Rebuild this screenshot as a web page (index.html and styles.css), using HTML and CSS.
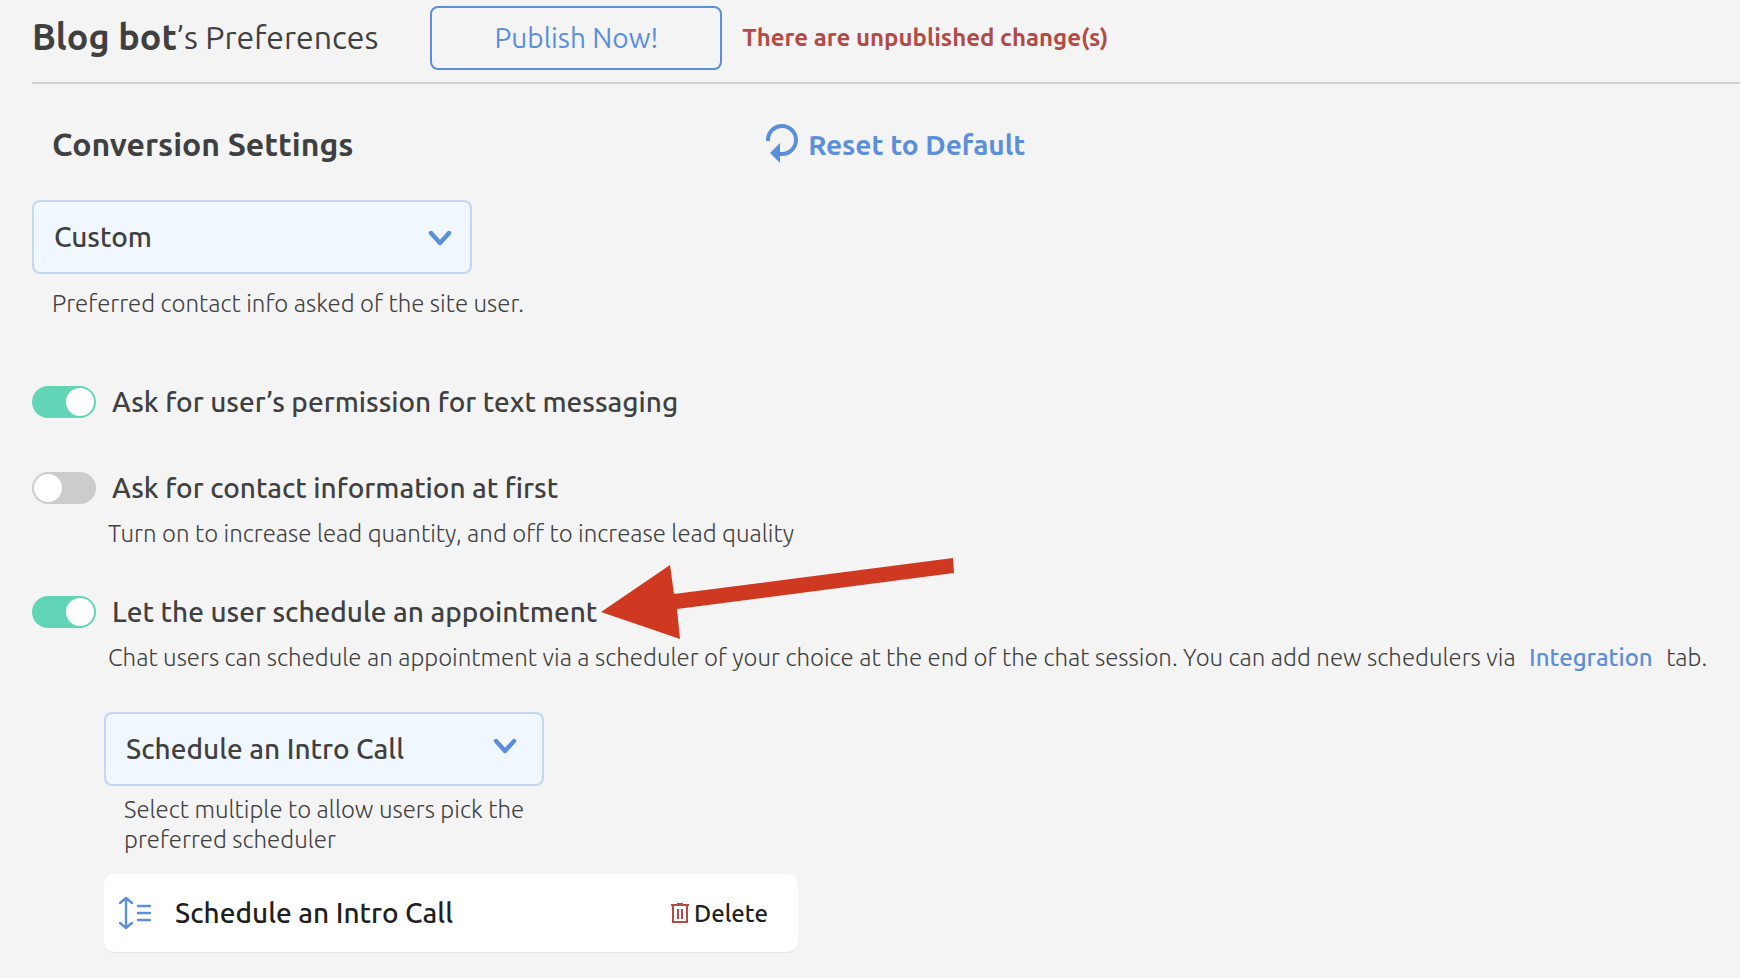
FILE: index.html
```
<!DOCTYPE html>
<html lang="en">
<head>
    <meta charset="UTF-8">
    <meta name="viewport" content="width=device-width, initial-scale=1.0">
    <title>Blog bot's Preferences</title>
    <link rel="stylesheet" href="styles.css">
</head>
<body>
    <header class="page-header">
        <h1><strong>Blog bot</strong><span>’s Preferences</span></h1>
        <button type="button" class="publish">Publish Now!</button>
        <p class="warning">There are unpublished change(s)</p>
    </header>

    <main class="settings">
        <div class="section-head">
            <h2 id="conversion">Conversion Settings</h2>
            <button type="button" class="reset">
                <svg width="32" height="42" viewBox="0 0 32 42" aria-hidden="true">
                    <path d="M2 18v-2a14 14 0 1 1 14 15h-2" fill="none" stroke="currentColor" stroke-width="4"/>
                    <path d="M4 30l10-10v20z" fill="currentColor"/>
                </svg>
                Reset to Default
            </button>
        </div>

        <div class="select-box">
            <select aria-labelledby="conversion">
                <option>Custom</option>
            </select>
            <svg class="chevron" width="24" height="16" viewBox="0 0 24 16" aria-hidden="true">
                <path d="M3 3l9 10 9-10"/>
            </svg>
        </div>
        <p class="select-help">Preferred contact info asked of the site user.</p>

        <!-- Toggles -->
        <div class="option option-first">
            <label class="option-label">
                <input type="checkbox" class="toggle" checked>
                <span>Ask for user’s permission for text messaging</span>
            </label>
        </div>

        <div class="option">
            <label class="option-label">
                <input type="checkbox" class="toggle">
                <span>Ask for contact information at first</span>
            </label>
            <p class="option-help">Turn on to increase lead quantity, and off to increase lead quality</p>
        </div>

        <div class="option">
            <label class="option-label">
                <input type="checkbox" class="toggle" checked>
                <span>Let the user schedule an appointment</span>
                <svg class="arrow" width="354" height="82" viewBox="0 0 354 82" aria-hidden="true">
                    <path d="M0 54L69 7l4 29L352 0l1 15L76 51l3 30z" fill="#d03921"/>
                </svg>
            </label>
            <p class="option-help">Chat users can schedule an appointment via a scheduler of your choice at the end of the chat session. You can add new schedulers via <a href="#integration">Integration</a> tab.</p>
        </div>

        <!-- Schedulers -->
        <div class="schedulers">
            <div class="select-box">
                <select aria-label="Scheduler">
                    <option>Schedule an Intro Call</option>
                </select>
                <svg class="chevron chevron-inner" width="24" height="16" viewBox="0 0 24 16" aria-hidden="true">
                    <path d="M3 3l9 10 9-10"/>
                </svg>
            </div>
            <p class="select-help">Select multiple to allow users pick the preferred scheduler</p>

            <div class="scheduler">
                <svg width="32" height="34" viewBox="0 0 32 34" fill="none" stroke="#5b8edc" stroke-width="2.4" stroke-linecap="round" stroke-linejoin="round" aria-hidden="true">
                    <path d="M7 2v30M1 7l6-5 6 5M1 27l6 5 6-5M19 10h12M19 17h12M19 24h12"/>
                </svg>
                <span class="scheduler-name">Schedule an Intro Call</span>
                <button type="button" class="delete">
                    <svg width="18" height="20" viewBox="0 0 18 20" fill="none" stroke="#b34a45" stroke-width="2" aria-hidden="true">
                        <path d="M0 2h18M6 1h6M2 3v16h14V3"/>
                        <path d="M7 6v10M11 6v10"/>
                    </svg>
                    Delete
                </button>
            </div>
        </div>
    </main>
</body>
</html>
```
FILE: styles.css
```
* {
    box-sizing: border-box;
}
body {
    font-family: Ubuntu, 'Noto Sans', sans-serif;
    margin: 0;
    padding: 6px 0 24px 32px;
    background-color: #f4f4f4;
    color: #404040;
}
h1, h2, p {
    margin: 0;
    font-weight: 400;
}
button, select {
    font-family: inherit;
    cursor: pointer;
}
button {
    padding: 0;
    border: none;
    background: none;
}
.page-header {
    display: flex;
    align-items: center;
    padding-bottom: 12px;
    border-bottom: 2px solid #d0d0d0;
}
h1 {
    display: flex;
    align-items: center;
    margin-right: 52px;
    padding-bottom: 2px;
    font-size: 32px;
    line-height: 40px;
}
h1 strong {
    font-size: 36px;
    font-weight: 700;
}
.publish {
    width: 292px;
    height: 64px;
    margin-right: 20px;
    padding-bottom: 2px;
    border: 2px solid #5b8edc;
    border-radius: 8px;
    color: #5b8edc;
    font-size: 28px;
}
.warning {
    padding-bottom: 2px;
    color: #b34a45;
    font-size: 24px;
    font-weight: 700;
}
.section-head {
    display: grid;
    grid-template-columns: 11fr 15fr;
    align-items: center;
    padding: 40px 0 36px 20px;
}
h2 {
    font-size: 32px;
    line-height: 40px;
    font-weight: 700;
}
.reset {
    display: flex;
    align-items: center;
    justify-self: start;
    gap: 10px;
    height: 40px;
    color: #5b8edc;
    font-size: 28px;
    font-weight: 700;
}
.select-box {
    position: relative;
    max-width: 440px;
}
.select-box select {
    display: block;
    width: 100%;
    height: 74px;
    padding: 0 60px 2px 20px;
    appearance: none;
    border: 2px solid #c2d7f3;
    border-radius: 8px;
    background-color: #f0f7ff;
    color: #404040;
    font-size: 28px;
    font-weight: 500;
}
.chevron {
    position: absolute;
    top: 30px;
    right: 20px;
    fill: none;
    stroke: #5b8edc;
    stroke-width: 4.4;
    stroke-linecap: round;
    stroke-linejoin: round;
    pointer-events: none;
}
.chevron-inner {
    top: 26px;
    right: 27px;
}
.select-help {
    max-width: 520px;
    padding: 15px 0 0 20px;
    font-size: 24px;
    font-weight: 300;
    line-height: 30px;
}
.option {
    padding-top: 46px;
}
.option-first {
    padding-top: 63px;
}
.option-label {
    display: inline-flex;
    align-items: center;
    gap: 16px;
    position: relative;
    font-size: 28px;
    font-weight: 500;
    line-height: 40px;
}
.toggle {
    appearance: none;
    flex: none;
    width: 64px;
    height: 32px;
    margin: 0;
    padding: 2px;
    border-radius: 16px;
    background-color: #cccccc;
    cursor: pointer;
}
.toggle::before {
    content: '';
    display: block;
    width: 28px;
    height: 28px;
    border-radius: 50%;
    background-color: #ffffff;
}
.toggle:checked {
    background-color: #62d5b7;
}
.toggle:checked::before {
    margin-left: auto;
}
.option-help {
    padding: 14px 0 0 76px;
    font-size: 24px;
    font-weight: 300;
    line-height: 24px;
}
.option-help a {
    margin: 0 8px;
    color: #5b8edc;
    font-weight: 500;
    text-decoration: none;
}
/* Red pointer drawn over the row, next to the label */
.arrow {
    position: absolute;
    left: 100%;
    bottom: -8px;
    margin-left: 4px;
    pointer-events: none;
}
.schedulers {
    padding: 42px 0 0 72px;
}
.schedulers .select-help {
    max-width: 460px;
    padding-top: 9px;
}
.scheduler {
    display: flex;
    align-items: center;
    max-width: 694px;
    height: 78px;
    margin-top: 19px;
    padding: 0 30px 0 15px;
    border-radius: 10px;
    background-color: #ffffff;
    box-shadow: 0 1px 1px #e4e4e4;
    color: #202020;
}
.scheduler-name {
    flex: 1;
    padding: 0 0 2px 24px;
    font-size: 28px;
    font-weight: 500;
}
.delete {
    display: flex;
    align-items: center;
    gap: 5px;
    color: #202020;
    font-size: 24px;
    font-weight: 500;
}
```
